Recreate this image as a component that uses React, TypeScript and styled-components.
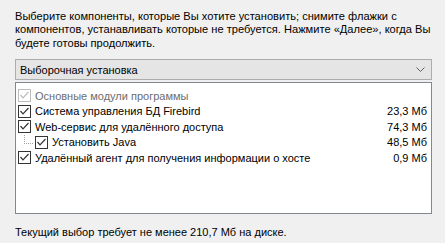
import React from 'react';
import styled, { createGlobalStyle } from 'styled-components';

const GlobalStyle = createGlobalStyle`
	html, body {
		margin: 0;
		padding: 0;
		background: #f0f0f0;
	}
	body {
		font-family: 'Liberation Sans', Arial, sans-serif;
		font-size: 11px;
		color: #000;
	}
`;

type Component = {
	label: string;
	size?: string;
	disabled?: boolean;
	level?: number;
};

const components: Component[] = [
	{ label: 'Основные модули программы', disabled: true },
	{ label: 'Система управления БД Firebird', size: '23,3 Мб' },
	{ label: 'Web-сервис для удалённого доступа', size: '74,3 Мб' },
	{ label: 'Установить Java', size: '48,5 Мб', level: 1 },
	{ label: 'Удалённый агент для получения информации о хосте', size: '0,9 Мб' },
];

export default function App() {
	return (
		<>
			<GlobalStyle />
			<Page>
				<Intro>
					Выберите компоненты, которые Вы хотите установить; снимите флажки с
					<br />
					компонентов, устанавливать которые не требуется. Нажмите «Далее», когда Вы
					<br />
					будете готовы продолжить.
				</Intro>
				<Combo>
					<span>Выборочная установка</span>
					<Chevron />
				</Combo>
				<List>
					{components.map((item) => (
						<Row key={item.label} $level={item.level ?? 0}>
							{item.level ? <TreeLine /> : null}
							<CheckBox disabled={item.disabled} />
							<Label $disabled={item.disabled}>{item.label}</Label>
							{item.size && <Size>{item.size}</Size>}
						</Row>
					))}
				</List>
				<Footer>Текущий выбор требует не менее 210,7 Мб на диске.</Footer>
			</Page>
		</>
	);
}

function CheckBox(props: { disabled?: boolean }) {
	const { disabled } = props;
	const color = disabled ? '#bcbcbc' : '#333333';

	return (
		<Box $color={color}>
			<svg width="11" height="11" viewBox="0 0 11 11">
				<polyline
					points="1.5,5 4,7.8 9.5,2"
					fill="none"
					stroke={color}
					strokeWidth="1.2"
				/>
			</svg>
		</Box>
	);
}

function Chevron() {
	return (
		<svg width="9" height="5" viewBox="0 0 9 5">
			<polyline points="0.5,0.5 4.5,4.5 8.5,0.5" fill="none" stroke="#606060" strokeWidth="1" />
		</svg>
	);
}

const Page = styled.div`
	width: 445px;
	height: 243px;
	box-sizing: border-box;
	padding: 10px 13px 0 15px;
	display: flex;
	flex-direction: column;
`;

const Intro = styled.p`
	margin: 0;
	font-size: 11.1px;
	line-height: 13.4px;
	white-space: nowrap;
`;

const Combo = styled.div`
	margin-top: 9px;
	height: 21px;
	box-sizing: border-box;
	border: 1px solid #adadad;
	background: #e5e5e5;
	display: flex;
	align-items: center;
	justify-content: space-between;
	padding: 0 6px 0 4px;
`;

const List = styled.div`
	margin-top: 2px;
	height: 132px;
	box-sizing: border-box;
	border: 1px solid #828790;
	background: #fff;
	padding: 5px 4px 0 2px;
	display: flex;
	flex-direction: column;
`;

const Row = styled.div<{ $level: number }>`
	position: relative;
	height: 15.5px;
	display: flex;
	align-items: center;
	padding-left: ${(p) => p.$level * 17}px;
	white-space: nowrap;
`;

const TreeLine = styled.span`
	position: absolute;
	left: 6px;
	top: 0;
	width: 8px;
	height: 8px;
	border-left: 1px dotted #a0a0a0;
	border-bottom: 1px dotted #a0a0a0;
`;

const Box = styled.span<{ $color: string }>`
	width: 13px;
	height: 13px;
	box-sizing: border-box;
	border: 1px solid ${(p) => p.$color};
	background: #fff;
	display: flex;
	align-items: center;
	justify-content: center;
	flex-shrink: 0;
`;

const Label = styled.span<{ $disabled?: boolean }>`
	margin-left: 4px;
	flex: 1;
	color: ${(p) => (p.$disabled ? '#6d6d6d' : '#000')};
`;

const Size = styled.span`
	text-align: right;
`;

const Footer = styled.div`
	margin-top: 11px;
	line-height: 14px;
`;
